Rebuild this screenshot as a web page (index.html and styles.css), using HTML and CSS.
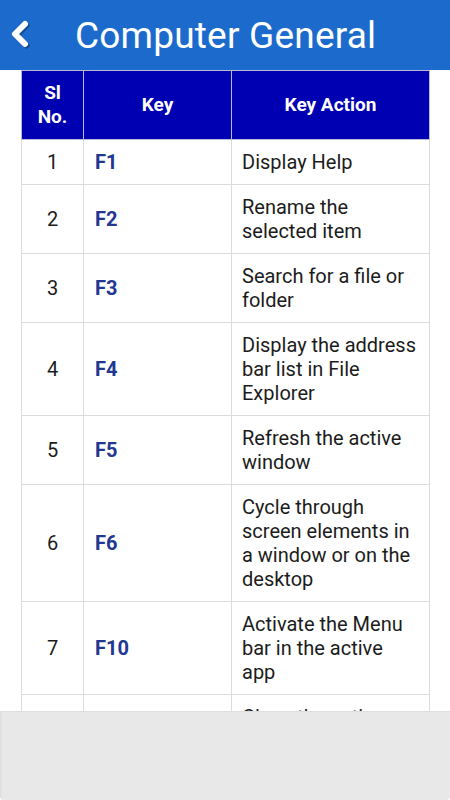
FILE: index.html
```html
<!DOCTYPE html>
<html>
<head>
<meta charset="utf-8">
<link rel="stylesheet" href="styles.css">
</head>
<body>
<header class="appbar">
  <svg class="back" width="28" height="32" viewBox="0 0 28 32">
    <path d="M19 6 L9 16 L19 26" fill="none" stroke="#0a2a55" stroke-opacity="0.5" stroke-width="6" stroke-linecap="round" stroke-linejoin="round" transform="translate(1.5,1.5)"/>
    <path d="M19 6 L9 16 L19 26" fill="none" stroke="#fff" stroke-width="6" stroke-linecap="round" stroke-linejoin="round"/>
  </svg>
  <h1 class="title">Computer General</h1>
</header>
<main class="content">
  <table class="keys">
    <colgroup>
      <col class="c-sl"><col class="c-key"><col class="c-act">
    </colgroup>
    <thead>
      <tr><th>Sl<br>No.</th><th>Key</th><th>Key Action</th></tr>
    </thead>
    <tbody>
      <tr><td class="sl">1</td><td class="key">F1</td><td>Display Help</td></tr>
      <tr><td class="sl">2</td><td class="key">F2</td><td>Rename the selected item</td></tr>
      <tr><td class="sl">3</td><td class="key">F3</td><td>Search for a file or folder</td></tr>
      <tr><td class="sl">4</td><td class="key">F4</td><td>Display the address bar list in File Explorer</td></tr>
      <tr><td class="sl">5</td><td class="key">F5</td><td>Refresh the active window</td></tr>
      <tr><td class="sl">6</td><td class="key">F6</td><td>Cycle through screen elements in a window or on the desktop</td></tr>
      <tr><td class="sl">7</td><td class="key">F10</td><td>Activate the Menu bar in the active app</td></tr>
      <tr><td class="sl">8</td><td class="key">Alt + F4</td><td>Close the active item, or exit the active app</td></tr>
    </tbody>
  </table>
</main>
<div class="ad"></div>
</body>
</html>
```
FILE: styles.css
```css
html, body {
  margin: 0;
  padding: 0;
  background: #fff;
  font-family: Roboto, "Liberation Sans", sans-serif;
}
.appbar {
  height: 70px;
  background: #1c6bcc;
  display: flex;
  align-items: center;
  box-sizing: border-box;
  padding-left: 6px;
}
.back {
  display: block;
  margin-top: -2px;
}
.title {
  margin: 0 0 0 41px;
  color: #fff;
  font-weight: 400;
  font-size: 37px;
  letter-spacing: 0.2px;
  line-height: 1;
}
.content {
  padding: 0 21px 120px 21px;
}
.keys {
  width: 408px;
  border-collapse: collapse;
  table-layout: fixed;
  font-size: 20px;
  line-height: 24px;
  color: #1c1c1c;
}
.c-sl { width: 62px; }
.c-key { width: 148px; }
.c-act { width: 198px; }
.keys th {
  background: #0000b3;
  color: #fff;
  font-weight: 700;
  font-size: 19px;
  text-align: center;
  border: 1px solid #b8b8d8;
  padding: 10px 4px;
}
.keys td {
  border: 1px solid #dcdcdc;
  padding: 10px 10px;
  vertical-align: middle;
}
.keys td.sl {
  text-align: center;
  padding: 10px 4px;
}
.keys td.key {
  color: #213790;
  font-weight: 700;
  padding-left: 11px;
}
.ad {
  position: fixed;
  left: 0;
  right: 0;
  bottom: 0;
  height: 88px;
  background: #e8e8e8;
  border-top: 1px solid #dedede;
  border-left: 2px solid #e0e0e0;
  border-radius: 0 0 4px 4px;
}
```
